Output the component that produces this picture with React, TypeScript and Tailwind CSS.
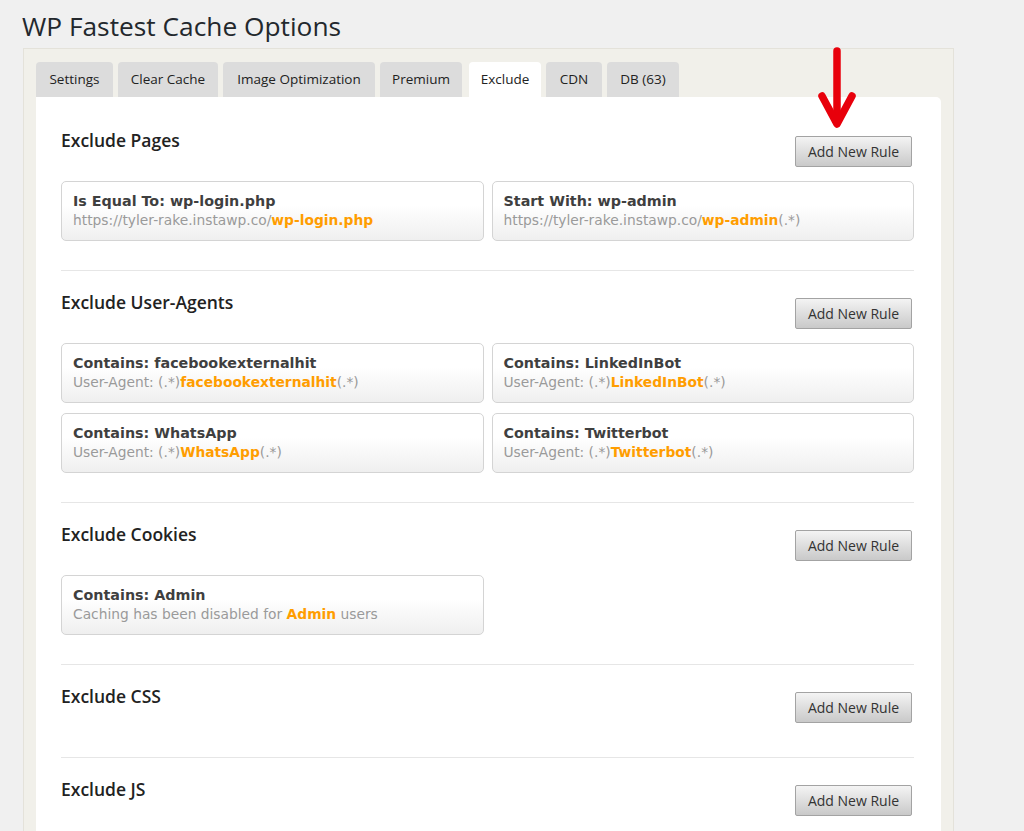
import React from 'react';

type Rule = { title: string; pre: string; hl: string; post?: string };

const sections: { name: string; rules: Rule[] }[] = [
  {
    name: 'Exclude Pages',
    rules: [
      { title: 'Is Equal To: wp-login.php', pre: 'https://tyler-rake.instawp.co/', hl: 'wp-login.php' },
      { title: 'Start With: wp-admin', pre: 'https://tyler-rake.instawp.co/', hl: 'wp-admin', post: '(.*)' },
    ],
  },
  {
    name: 'Exclude User-Agents',
    rules: [
      { title: 'Contains: facebookexternalhit', pre: 'User-Agent: (.*)', hl: 'facebookexternalhit', post: '(.*)' },
      { title: 'Contains: LinkedInBot', pre: 'User-Agent: (.*)', hl: 'LinkedInBot', post: '(.*)' },
      { title: 'Contains: WhatsApp', pre: 'User-Agent: (.*)', hl: 'WhatsApp', post: '(.*)' },
      { title: 'Contains: Twitterbot', pre: 'User-Agent: (.*)', hl: 'Twitterbot', post: '(.*)' },
    ],
  },
  {
    name: 'Exclude Cookies',
    rules: [{ title: 'Contains: Admin', pre: 'Caching has been disabled for ', hl: 'Admin', post: ' users' }],
  },
  { name: 'Exclude CSS', rules: [] },
  { name: 'Exclude JS', rules: [] },
];

// widths taken from the screenshot, Segoe UI is wider than Open Sans
const tabs = [
  { label: 'Settings', w: 'w-[77px]' },
  { label: 'Clear Cache', w: 'w-[100px]' },
  { label: 'Image Optimization', w: 'w-[152px]' },
  { label: 'Premium', w: 'w-[82px]' },
  { label: 'Exclude', w: 'w-[72px] ml-[2px]', active: true },
  { label: 'CDN', w: 'w-[56px]' },
  { label: 'DB (63)', w: 'w-[72px]' },
];

const RuleCard = ({ rule }: { rule: Rule }) => (
  <div className="h-[60px] rounded-[5px] border border-[#d4d4d4] bg-gradient-to-b from-white from-40% to-[#efefef] pl-[11px] pt-[10px] font-['DejaVu_Sans',Verdana,sans-serif]">
    <div className="text-[14.3px] font-bold leading-[18px] text-[#3f3f3f]">{rule.title}</div>
    <div className="text-[13.8px] leading-[20px] text-[#9a9a9a]">
      {rule.pre}
      <span className="font-bold text-[#ff9d00]">{rule.hl}</span>
      {rule.post}
    </div>
  </div>
);

export default function App() {
  return (
    <div className="relative min-h-screen bg-[#f0f0f0] font-['Open_Sans',sans-serif] text-[#222]">
      <h1 className="pl-[22px] pt-[8px] text-[26.3px] leading-[36px] text-[#23282d]">WP Fastest Cache Options</h1>
      <div className="ml-[23px] mt-[4px] w-[931px] border border-[#e4e2da] bg-[#f1f0ea] px-[12px] pt-[13px]">
        <div className="flex gap-[5px] text-[13.5px] text-[#222]">
          {tabs.map((t) => (
            <div
              key={t.label}
              className={
                t.active
                  ? `flex h-[35px] items-center justify-center rounded-t-[4px] bg-white ${t.w}`
                  : `flex h-[35px] items-center justify-center rounded-t-[4px] bg-[#dcdcdc] ${t.w}`
              }
            >
              {t.label}
            </div>
          ))}
        </div>
        <div className="rounded-tr-[5px] bg-white pl-[25px] pr-[27px] pt-[11px]">
          {sections.map((s, i) => (
            <div key={s.name} className={i > 0 ? 'border-t border-[#e6e6e6] pt-[19px]' : 'pt-[20px]'}>
              <div className="flex items-start justify-between">
                <h2 className="text-[17.5px] font-semibold leading-[24px] text-[#222]">{s.name}</h2>
                <button className="mr-[2px] mt-[8px] h-[31px] w-[117px] rounded-[2px] border border-[#a3a3a3] bg-gradient-to-b from-[#f4f4f4] to-[#c9c9c9] text-[14px] text-[#333]">
                  Add New Rule
                </button>
              </div>
              {s.rules.length > 0 ? (
                <div className="mt-[14px] grid grid-cols-2 gap-x-[8px] gap-y-[10px] pb-[29px]">
                  {s.rules.map((r) => (
                    <RuleCard key={r.title} rule={r} />
                  ))}
                </div>
              ) : (
                <div className="h-[34px]" />
              )}
            </div>
          ))}
        </div>
      </div>
      <svg className="absolute left-[818px] top-[44px]" width="40" height="86" viewBox="0 0 40 86" fill="none">
        <path d="M19 7 L19 76" stroke="#e8000b" strokeWidth="7.5" strokeLinecap="round" />
        <path d="M4 52 L19 80 L34 52" stroke="#e8000b" strokeWidth="7.5" strokeLinecap="round" strokeLinejoin="round" />
      </svg>
    </div>
  );
}
